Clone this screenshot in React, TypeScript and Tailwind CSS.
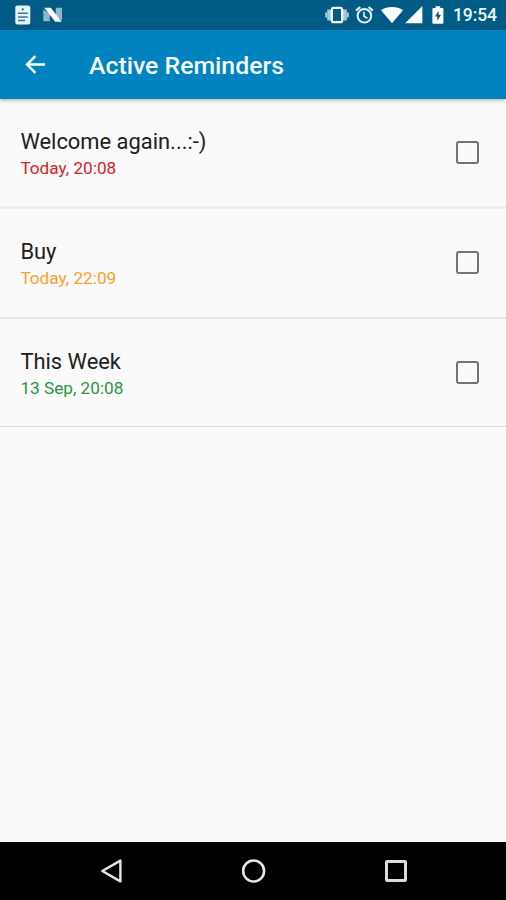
type Reminder = {
  title: string
  due: string
  dueClass: string
  rowClass: string
  boxClass: string
}

const REMINDERS: Reminder[] = [
  {
    title: 'Welcome again...:-)',
    due: 'Today, 20:08',
    dueClass: 'text-[#d3222a]',
    rowClass: 'h-[110px] border-b-[3px] border-[#eeeeee] pt-[29px]',
    boxClass: 'mt-[13px]',
  },
  {
    title: 'Buy',
    due: 'Today, 22:09',
    dueClass: 'text-[#fb9f2c]',
    rowClass: 'h-[109.5px] border-b-2 border-[#e6e6e6] pt-[29px]',
    boxClass: 'mt-[13px]',
  },
  {
    title: 'This Week',
    due: '13 Sep, 20:08',
    dueClass: 'text-[#2c9440]',
    rowClass: 'h-[108.5px] border-b border-[#dcdcdc] pt-[29.5px]',
    boxClass: 'mt-[13px]',
  },
]

function NoteIcon() {
  return (
    <svg width="16" height="20" viewBox="0 0 16 20" className="ml-[15px]">
      <rect x="0.3" y="0.5" width="15" height="19" rx="2" fill="#e8f3f8" />
      <circle cx="7.7" cy="4.3" r="1.1" fill="#1c5f80" />
      <path d="M3 8.3h9.8M3 12h9.8M3 15.6h7" stroke="#3b7896" strokeWidth="1.5" />
    </svg>
  )
}

function NougatIcon() {
  return (
    <svg width="20" height="16" viewBox="0 0 20 16" className="ml-3">
      <path d="M0.3 2.4 6.8 7v7.2H0.3zM12.8 0.8H19v12.8L12.8 9z" fill="#8fb9cd" />
      <path d="M1.2 0.8h6.6l11 14h-6.6z" fill="#fff" />
    </svg>
  )
}

function VibrateIcon() {
  return (
    <svg width="24" height="18" viewBox="0 0 24 18" fill="none" className="mr-[6px]">
      <path d="M1.2 6.5v5M22.8 6.5v5" stroke="#a9c9d8" strokeWidth="2" />
      <path d="M4.2 3.5v11M19.8 3.5v11" stroke="#a9c9d8" strokeWidth="4" />
      <rect x="6.9" y="1.8" width="10.2" height="14.4" rx="1.5" stroke="#fff" strokeWidth="2.2" />
    </svg>
  )
}

function AlarmIcon() {
  return (
    <svg width="19" height="18" viewBox="0 0 19 18" fill="none" stroke="#e4f0f5" className="mr-[7px]">
      <circle cx="9.4" cy="9.8" r="6.8" strokeWidth="2" />
      <path d="M1 4.6 5.2 1M17.8 4.6 13.6 1" strokeWidth="2.2" />
      <path d="M9 5.8v4.5l3.4 2" strokeWidth="1.6" />
    </svg>
  )
}

function WifiIcon() {
  return (
    <svg width="22" height="18" viewBox="0 0 22 18" className="mr-[2px]">
      <path d="M0 4.2C6 -0.1 16 -0.1 22 4.2L11 17.3z" fill="#fff" />
    </svg>
  )
}

function SignalIcon() {
  return (
    <svg width="18" height="18" viewBox="0 0 18 18" className="mr-[9px]">
      <path d="M17.4 0.1v17.1H0.1z" fill="#fff" />
    </svg>
  )
}

function BatteryIcon() {
  return (
    <svg width="12" height="18" viewBox="0 0 12 18" className="mr-[9px]">
      <path d="M3.6 0.3h4.6v1.6h2.2q1 0 1 1v13.8q0 1-1 1h-9q-1 0-1-1V2.9q0-1 1-1h2.2z" fill="#fff" />
      <path d="M6.6 4.7 3 10.4h2.3v4.7l3.6-6H6.6z" fill="#174f72" />
    </svg>
  )
}

function StatusBar() {
  return (
    <div className="flex h-[30px] items-center bg-[#005b85]">
      <NoteIcon />
      <NougatIcon />
      <div className="ml-auto flex items-center pr-[10px]">
        <VibrateIcon />
        <AlarmIcon />
        <WifiIcon />
        <SignalIcon />
        <BatteryIcon />
        <span className="w-[43px] pt-px text-[17.5px] leading-[29px] font-medium tracking-[-0.1px] whitespace-nowrap text-[#eef6fa]">
          19:54
        </span>
      </div>
    </div>
  )
}

function AppBar() {
  return (
    <header className="relative flex h-[69px] items-center bg-[#0083bf] pt-[2px] shadow-[0_1px_4px_rgba(0,0,0,0.35)]">
      <svg
        width="22"
        height="22"
        viewBox="0 0 22 22"
        fill="none"
        stroke="#fff"
        strokeWidth="2.4"
        className="ml-6"
      >
        <path d="M21 9.5H3M11.4 1.2 3 9.5l8.4 8.3" />
      </svg>
      <h1 className="ml-[43px] text-[24.8px] leading-[30px] font-medium text-[#f5fbff]">
        Active Reminders
      </h1>
    </header>
  )
}

function ReminderRow({ title, due, dueClass, rowClass, boxClass }: Reminder) {
  return (
    <li className={`flex items-start justify-between pr-[27px] pl-[20.4px] ${rowClass}`}>
      <div>
        <p className="text-[21.9px] leading-7 text-[#212121]">{title}</p>
        <p className={`text-[17.2px] leading-6 ${dueClass}`}>{due}</p>
      </div>
      <span
        role="checkbox"
        aria-checked="false"
        aria-label={title}
        className={`size-[23px] rounded-[3px] border-2 border-[#747474] ${boxClass}`}
      />
    </li>
  )
}

function NavBar() {
  return (
    <nav className="flex h-[58px] items-center bg-black">
      <svg width="24" height="26" viewBox="0 0 24 26" fill="none" className="ml-[100px]">
        <path d="M2.3 13 20.4 2.6v20.8z" stroke="#e6e6e6" strokeWidth="2.4" strokeLinejoin="round" />
      </svg>
      <svg width="24" height="24" viewBox="0 0 24 24" fill="none" className="ml-[118px]">
        <circle cx="11.6" cy="12" r="10.5" stroke="#e6e6e6" strokeWidth="2.6" />
      </svg>
      <span className="ml-[119px] size-[22px] rounded-[2px] border-[3px] border-[#dcdcdc]" />
    </nav>
  )
}

export default function App() {
  return (
    <div className="flex h-[900px] w-[506px] flex-col overflow-hidden bg-[#fafafa] font-['Roboto',sans-serif]">
      <StatusBar />
      <AppBar />
      <ul className="flex-1">
        {REMINDERS.map((reminder) => (
          <ReminderRow key={reminder.title} {...reminder} />
        ))}
      </ul>
      <NavBar />
    </div>
  )
}
